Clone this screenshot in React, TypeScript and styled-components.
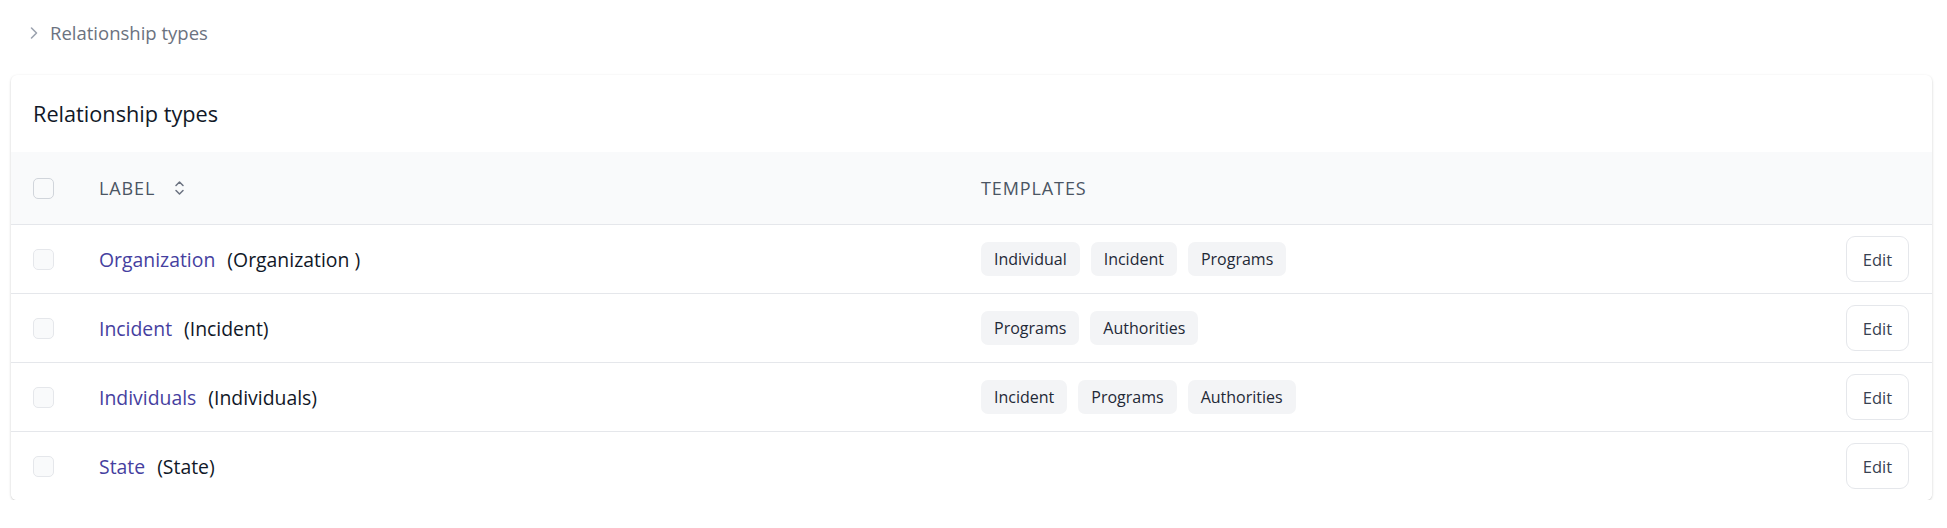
import React from "react";
import styled, { createGlobalStyle } from "styled-components";

const Global = createGlobalStyle`
  html, body { margin: 0; padding: 0; background: #ffffff; }
  body { font-family: "Open Sans", "Lato", sans-serif; color: #111827; }
  * { box-sizing: border-box; }
`;

const Page = styled.div`
  padding: 0 15px 0 11px;
`;

const Breadcrumb = styled.nav`
  height: 75px;
  display: flex;
  align-items: center;
  gap: 11px;
  padding: 0 0 10px 18px;
  color: #6b7280;
  font-size: 18.5px;
`;

const Card = styled.section`
  background: #fff;
  border-radius: 6px;
  box-shadow: 0 1px 3px rgba(0, 0, 0, 0.14), 0 1px 2px rgba(0, 0, 0, 0.08);
  overflow: hidden;
`;

const CardTitle = styled.h2`
  margin: 0;
  height: 77px;
  display: flex;
  align-items: center;
  padding: 0 22px 0;
  font-size: 21.7px;
  font-weight: 500;
  color: #111827;
`;

const Row = styled.div<{ $head?: boolean; $h: number }>`
  display: grid;
  grid-template-columns: 66px 882px 1fr auto;
  align-items: center;
  height: ${(p) => p.$h}px;
  padding: 0 23px 0 22px;
  background: ${(p) => (p.$head ? "#f9fafb" : "#fff")};
  border-bottom: 1px solid #e5e7eb;
  &:last-child { border-bottom: none; }
`;

const Check = styled.span<{ $head?: boolean }>`
  display: block;
  width: 21px;
  height: 21px;
  border-radius: 5px;
  border: 1px solid ${(p) => (p.$head ? "#d1d5db" : "#e5e7eb")};
  background: #f9fafb;
`;

const HeadLabel = styled.div`
  display: flex;
  align-items: center;
  gap: 19px;
  font-size: 18px;
  letter-spacing: 0.9px;
  color: #4b5563;
  text-transform: uppercase;
`;

const LabelCell = styled.div`
  display: flex;
  align-items: center;
  gap: 12px;
  font-size: 19.4px;
`;

const Link = styled.a`
  color: #463fa0;
  text-decoration: none;
`;

const Sub = styled.span`
  color: #111827;
`;

const Tags = styled.div`
  display: flex;
  gap: 11px;
`;

const Tag = styled.span`
  display: inline-flex;
  align-items: center;
  height: 34px;
  padding: 0 13px;
  border-radius: 7px;
  background: #f3f4f6;
  color: #1f2937;
  font-size: 16px;
`;

const EditButton = styled.button`
  width: 63px;
  height: 46px;
  border: 1px solid #e5e7eb;
  border-radius: 9px;
  background: #fff;
  color: #374151;
  font-family: inherit;
  font-size: 16.5px;
  padding: 0;
  cursor: pointer;
`;

const rows = [
  { name: "Organization", sub: "(Organization )", tags: ["Individual", "Incident", "Programs"] },
  { name: "Incident", sub: "(Incident)", tags: ["Programs", "Authorities"] },
  { name: "Individuals", sub: "(Individuals)", tags: ["Incident", "Programs", "Authorities"] },
  { name: "State", sub: "(State)", tags: [] as string[] },
];

const Chevron = () => (
  <svg width="10" height="14" viewBox="0 0 10 14" fill="none">
    <path d="M2.5 2 L7.5 7 L2.5 12" stroke="#9ca3af" strokeWidth="1.6" strokeLinecap="round" strokeLinejoin="round" />
  </svg>
);

const SortIcon = () => (
  <svg width="11" height="16" viewBox="0 0 11 16" fill="none">
    <path d="M2 5.5 L5.5 2 L9 5.5" stroke="#6b7280" strokeWidth="1.5" strokeLinecap="round" strokeLinejoin="round" />
    <path d="M2 10.5 L5.5 14 L9 10.5" stroke="#6b7280" strokeWidth="1.5" strokeLinecap="round" strokeLinejoin="round" />
  </svg>
);

export default function App() {
  return (
    <Page>
      <Global />
      <Breadcrumb>
        <Chevron />
        <span>Relationship types</span>
      </Breadcrumb>
      <Card>
        <CardTitle>Relationship types</CardTitle>
        <Row $head $h={73}>
          <Check $head />
          <HeadLabel>
            Label <SortIcon />
          </HeadLabel>
          <HeadLabel>Templates</HeadLabel>
          <span />
        </Row>
        {rows.map((r, i) => (
          <Row key={r.name} $h={i === rows.length - 1 ? 68 : 69}>
            <Check />
            <LabelCell>
              <Link href="#">{r.name}</Link>
              <Sub>{r.sub}</Sub>
            </LabelCell>
            <Tags>
              {r.tags.map((t) => (
                <Tag key={t}>{t}</Tag>
              ))}
            </Tags>
            <EditButton>Edit</EditButton>
          </Row>
        ))}
      </Card>
    </Page>
  );
}
